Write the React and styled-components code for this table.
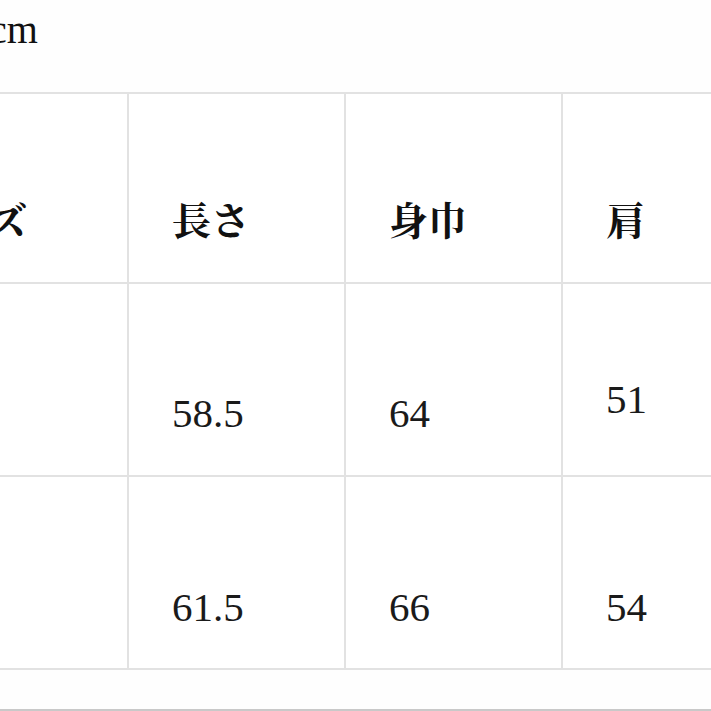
import React from "react";
import styled, { createGlobalStyle } from "styled-components";

const rows = [
  { height: 190, cells: [
    { text: "サイズ", pt: 60, head: true },
    { text: "長さ", pt: 60, head: true },
    { text: "身巾", pt: 60, head: true },
    { text: "肩", pt: 60, head: true },
  ] },
  { height: 193, cells: [
    { text: "", pt: 0 },
    { text: "58.5", pt: 67 },
    { text: "64", pt: 67 },
    { text: "51", pt: 39 },
  ] },
  { height: 193, cells: [
    { text: "", pt: 0 },
    { text: "61.5", pt: 69 },
    { text: "66", pt: 69 },
    { text: "54", pt: 69 },
  ] },
];

const App = () => {
  return (
    <>
      <GlobalStyle />
      <Page>
        <Unit>cm</Unit>
        <SizeTable>
          {rows.map((row, r) =>
            row.cells.map((cell, c) => (
              <Cell key={`${r}-${c}`} $height={row.height} $pt={cell.pt}>
                {cell.head ? <HeadText>{cell.text}</HeadText> : <NumText>{cell.text}</NumText>}
              </Cell>
            ))
          )}
        </SizeTable>
      </Page>
    </>
  );
};

const GlobalStyle = createGlobalStyle`
  html, body {
    margin: 0;
    padding: 0;
    background: #ffffff;
  }
`;

const Page = styled.div`
  width: 711px;
  height: 711px;
  box-sizing: border-box;
  overflow: hidden;
  background: #fefefe;
  border-bottom: 2px solid #c9c9c9;
`;

const Unit = styled.div`
  margin-left: -11px;
  padding-top: 10px;
  font-family: "Liberation Serif", serif;
  font-size: 40px;
  line-height: 1;
  color: #111;
`;

const SizeTable = styled.div`
  display: grid;
  grid-template-columns: 259px 217px 217px 217px;
  margin-top: 42px;
  margin-left: -130px;
  width: 910px;
  border-top: 2px solid #e2e2e2;
`;

const Cell = styled.div`
  box-sizing: border-box;
  height: ${(p) => p.$height}px;
  display: flex;
  align-items: center;
  padding-left: 43px;
  padding-top: ${(p) => p.$pt}px;
  border-right: 2px solid #e2e2e2;
  border-bottom: 2px solid #e2e2e2;
  background: #fff;
`;

const HeadText = styled.span`
  font-family: "Noto Serif CJK JP", "Noto Sans CJK JP", sans-serif;
  font-size: 39px;
  font-weight: 700;
  line-height: 1;
  color: #111;
`;

const NumText = styled.span`
  font-family: "Liberation Serif", serif;
  font-size: 41px;
  line-height: 1;
  color: #1a1a1a;
`;

export default App;
